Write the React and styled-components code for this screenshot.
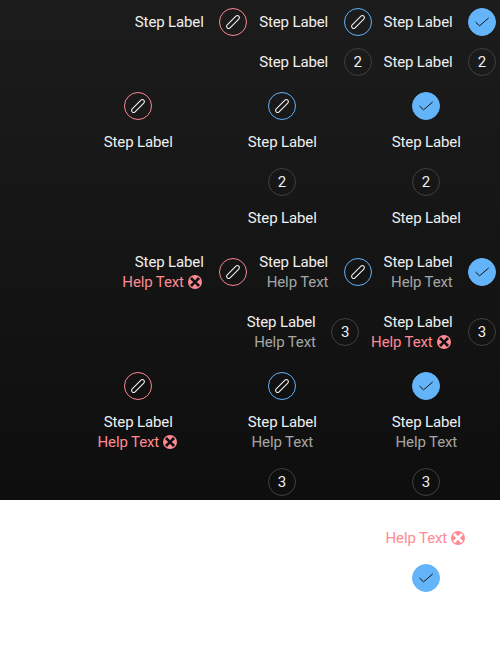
import React from 'react';
import styled, { createGlobalStyle } from 'styled-components';

const GlobalStyle = createGlobalStyle`
  * { box-sizing: border-box; }
  html { background: #fff; overflow: hidden; }
  body { margin: 0; font-family: Roboto, "Liberation Sans", sans-serif; font-size: 15px; line-height: 20px; letter-spacing: -0.13px; }
`;

const Page = styled.main`
  width: 500px;
  height: 656px;
  background: linear-gradient(#1c1c1c, #0e0e0e) top / 100% 500px no-repeat #fff;
  padding: 8px 4px 0 0;
`;

const Row = styled.div`
  display: flex;
  justify-content: flex-end;
  gap: 12px;
  margin-bottom: ${(p) => p.$after || 0}px;
`;

const Columns = styled.div`
  display: grid;
  grid-template-columns: repeat(3, 144px);
  justify-content: end;
  margin-right: -2px;
  margin-bottom: ${(p) => p.$after || 0}px;
`;

const StepRow = styled.div`
  display: flex;
  align-items: center;
  gap: 16px;
`;

const StepColumn = styled.div`
  display: flex;
  flex-direction: column;
  align-items: center;
  gap: 12px;
`;

const Marker = styled.span`
  display: flex;
  align-items: center;
  justify-content: center;
  flex: none;
  width: 28px;
  height: 28px;
  border-radius: 50%;
  border: 1px solid ${(p) => ({ error: '#fa8790', active: '#62b2f9', done: '#64b4fa', idle: '#404040' })[p.$kind]};
  background: ${(p) => (p.$kind === 'done' ? '#64b4fa' : 'transparent')};
  color: ${(p) => (p.$kind === 'done' ? '#111' : '#f0f0f0')};
`;

const Texts = styled.div`
  display: flex;
  flex-direction: column;
  align-items: ${(p) => (p.$center ? 'center' : 'flex-end')};
`;

const Label = styled.span`
  width: 68.4px;
  white-space: nowrap;
  color: #f0f0f0;
`;

const Help = styled.span`
  display: flex;
  align-items: center;
  gap: 4px;
  white-space: nowrap;
  color: ${(p) => (p.$error ? '#ff8a93' : '#a6a6a6')};
`;

const HelpWord = styled.span`
  width: 60.9px;
`;

const IconSvg = styled.svg`
  flex: none;
  overflow: visible;
`;

const Pen = () => (
  <IconSvg width="16" height="16" viewBox="0 0 16 16" fill="none" stroke="currentColor" strokeWidth="1.1">
    <rect x="6" y="-0.2" width="4" height="16.4" rx="2" transform="rotate(45 8 8)" />
  </IconSvg>
);

const Check = () => (
  <IconSvg width="16" height="16" viewBox="0 0 16 16" fill="none" stroke="currentColor" strokeLinecap="round" strokeLinejoin="round">
    <path d="M1.8 8.3 5.6 11.8 14.4 4.2" />
  </IconSvg>
);

const ErrorIcon = () => (
  <IconSvg width="16" height="16" viewBox="0 0 16 16">
    <path
      fill="#ff8a93"
      fillRule="evenodd"
      d="M8 1a7 7 0 1 0 0 14A7 7 0 0 0 8 1ZM2.9 5 5 2.9 8 6.2 11 2.9 13.1 5 9.8 8 13.1 11 11 13.1 8 9.8 5 13.1 2.9 11 6.2 8Z"
    />
  </IconSvg>
);

const MarkerFor = ({ kind, n }) => (
  <Marker $kind={kind}>{kind === 'done' ? <Check /> : kind === 'idle' ? n : <Pen />}</Marker>
);

const HelpText = ({ error }) => (
  <Help $error={error}>
    <HelpWord>Help Text</HelpWord>
    {error && <ErrorIcon />}
  </Help>
);

const Horizontal = ({ kind, n, help, error }) => (
  <StepRow>
    <Texts>
      <Label>Step Label</Label>
      {help && <HelpText error={error} />}
    </Texts>
    <MarkerFor kind={kind} n={n} />
  </StepRow>
);

const Vertical = ({ kind, n, label, help, error }) => (
  <StepColumn>
    <MarkerFor kind={kind} n={n} />
    {label && (
      <Texts $center>
        <Label>Step Label</Label>
        {help && <HelpText error={error} />}
      </Texts>
    )}
  </StepColumn>
);

export default function App() {
  return (
    <>
      <GlobalStyle />
      <Page>
        <Row $after={12}>
          <Horizontal kind="error" />
          <Horizontal kind="active" />
          <Horizontal kind="done" />
        </Row>
        <Row $after={16}>
          <Horizontal kind="idle" n={2} />
          <Horizontal kind="idle" n={2} />
        </Row>
        <Columns $after={16}>
          <Vertical kind="error" label />
          <Vertical kind="active" label />
          <Vertical kind="done" label />
        </Columns>
        <Columns $after={24}>
          <span />
          <Vertical kind="idle" n={2} label />
          <Vertical kind="idle" n={2} label />
        </Columns>
        <Row $after={20}>
          <Horizontal kind="error" help error />
          <Horizontal kind="active" help />
          <Horizontal kind="done" help />
        </Row>
        <Row $after={20}>
          <Horizontal kind="idle" n={3} help />
          <Horizontal kind="idle" n={3} help error />
        </Row>
        <Columns $after={16}>
          <Vertical kind="error" label help error />
          <Vertical kind="active" label help />
          <Vertical kind="done" label help />
        </Columns>
        <Columns $after={32}>
          <span />
          <Vertical kind="idle" n={3} />
          <Vertical kind="idle" n={3} />
        </Columns>
        <Columns $after={16}>
          <span />
          <span />
          <Texts $center><HelpText error /></Texts>
        </Columns>
        <Columns>
          <span />
          <span />
          <Vertical kind="done" />
        </Columns>
      </Page>
    </>
  );
}
